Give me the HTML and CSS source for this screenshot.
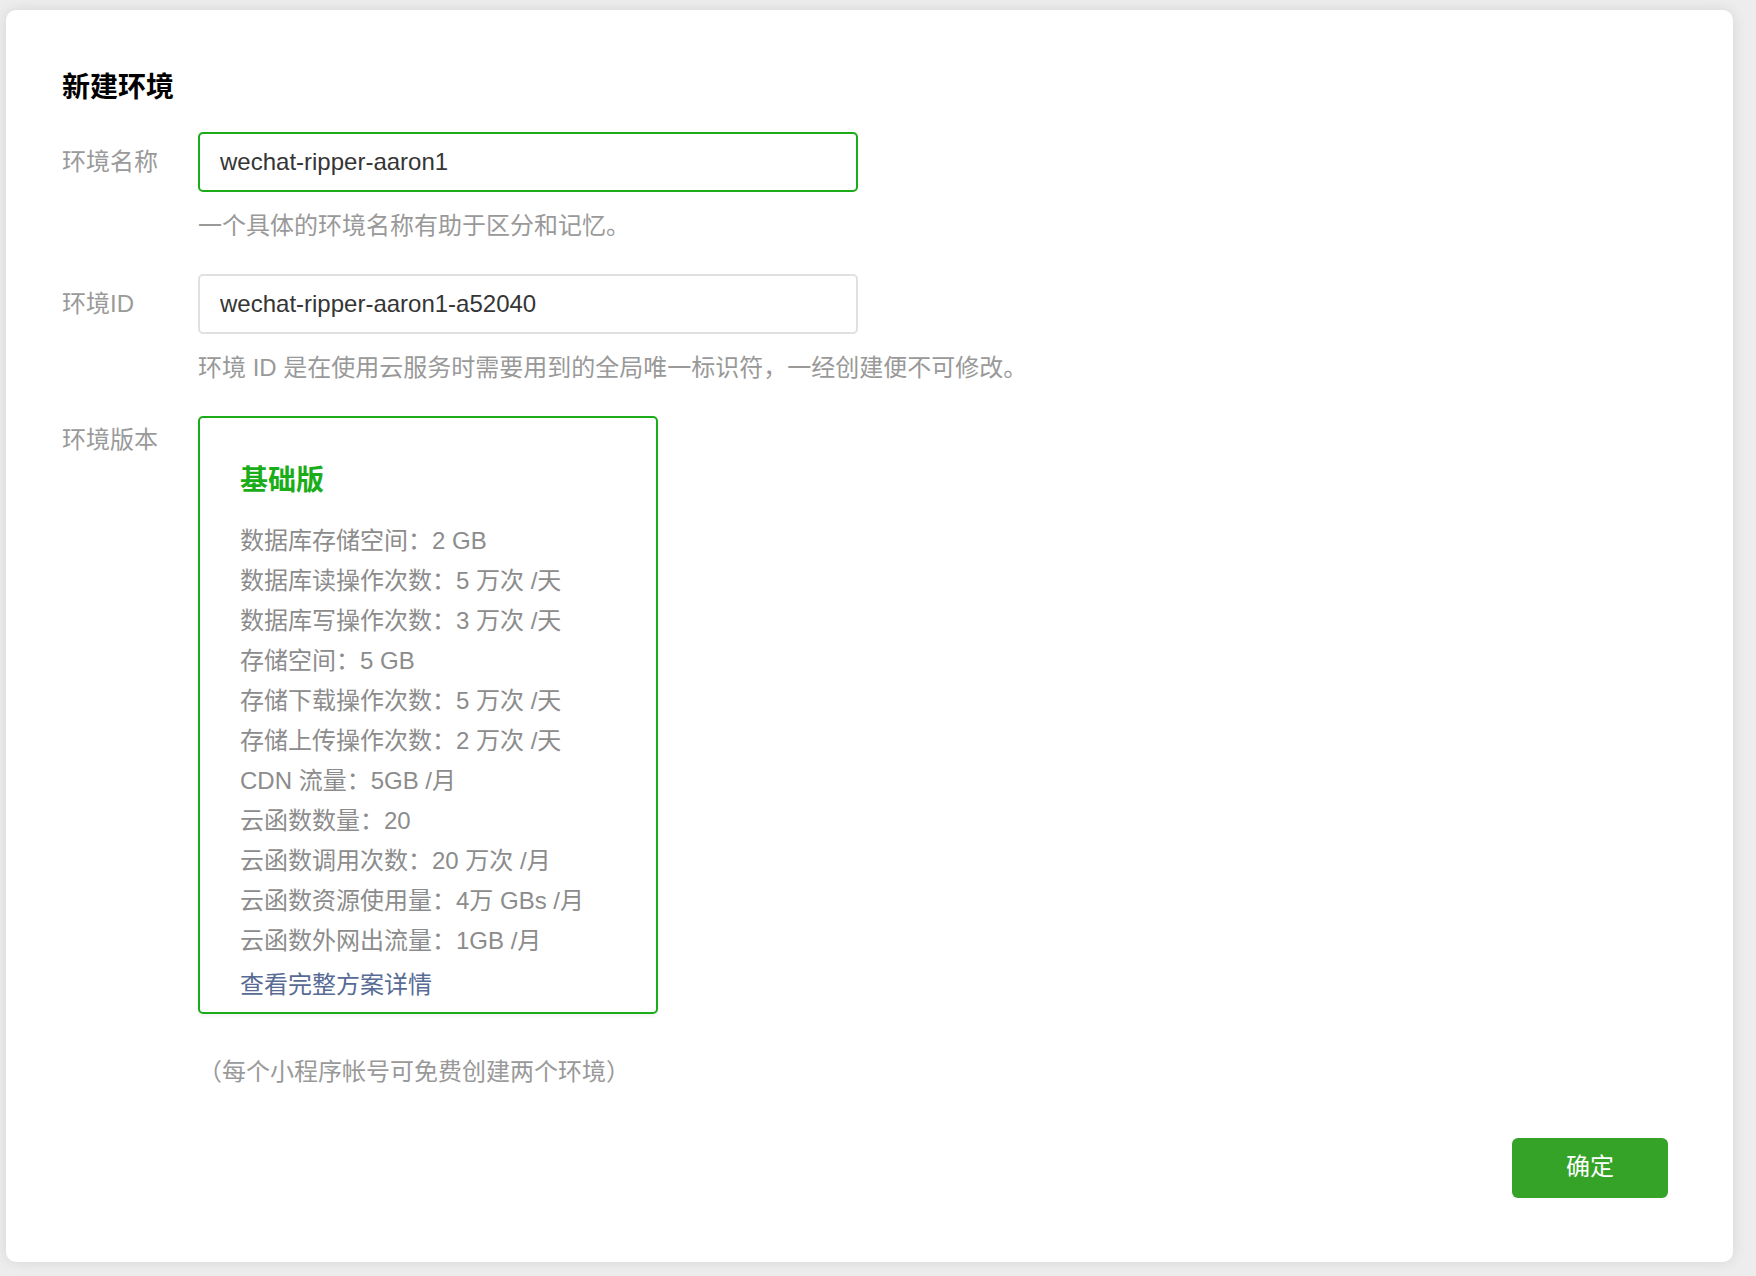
FILE: index.html
```html
<!DOCTYPE html>
<html lang="zh-CN">
<head>
<meta charset="utf-8">
<title>新建环境</title>
<link rel="stylesheet" href="styles.css">
</head>
<body>
<div class="card">
  <h1 class="title">新建环境</h1>

  <div class="row">
    <label class="label">环境名称</label>
    <div class="field">
      <input class="input input-active" type="text" value="wechat-ripper-aaron1" readonly>
    </div>
  </div>
  <div class="hint">一个具体的环境名称有助于区分和记忆。</div>

  <div class="row row-gap">
    <label class="label">环境ID</label>
    <div class="field">
      <input class="input" type="text" value="wechat-ripper-aaron1-a52040" readonly>
    </div>
  </div>
  <div class="hint">环境 ID 是在使用云服务时需要用到的全局唯一标识符，一经创建便不可修改。</div>

  <div class="row row-top row-gap">
    <label class="label label-top">环境版本</label>
    <div class="plan">
      <div class="plan-name">基础版</div>
      <ul class="plan-list">
        <li>数据库存储空间：2 GB</li>
        <li>数据库读操作次数：5 万次 /天</li>
        <li>数据库写操作次数：3 万次 /天</li>
        <li>存储空间：5 GB</li>
        <li>存储下载操作次数：5 万次 /天</li>
        <li>存储上传操作次数：2 万次 /天</li>
        <li>CDN 流量：5GB /月</li>
        <li>云函数数量：20</li>
        <li>云函数调用次数：20 万次 /月</li>
        <li>云函数资源使用量：4万 GBs /月</li>
        <li>云函数外网出流量：1GB /月</li>
      </ul>
      <a class="plan-link" href="#">查看完整方案详情</a>
    </div>
  </div>
  <div class="note">（每个小程序帐号可免费创建两个环境）</div>

  <div class="actions">
    <button class="btn" type="button">确定</button>
  </div>
</div>
</body>
</html>
```

FILE: styles.css
```css
* {
  box-sizing: border-box;
}

html, body {
  margin: 0;
  padding: 0;
}

body {
  background: #ededed;
  font-family: "Liberation Sans", "Noto Sans CJK SC", sans-serif;
  font-size: 24px;
  color: #353535;
  padding: 10px 23px 14px 6px;
}

.card {
  width: 1727px;
  background: #fff;
  border-radius: 10px;
  box-shadow: 0 0 14px rgba(0, 0, 0, 0.10);
  padding: 58px 65px 64px 56px;
}

.title {
  margin: 0 0 24px 0;
  font-size: 28px;
  line-height: 40px;
  font-weight: bold;
  color: #000;
}

.row {
  display: flex;
  align-items: center;
}

.row-gap {
  margin-top: 30px;
}

.row-top {
  align-items: flex-start;
}

.label {
  width: 136px;
  flex: none;
  color: #9a9a9a;
  line-height: 36px;
}

.label-top {
  margin-top: 6px;
}

.field {
  flex: none;
}

.input {
  display: block;
  width: 660px;
  height: 60px;
  padding: 0 20px;
  border: 2px solid #e0e0e0;
  border-radius: 5px;
  font-family: inherit;
  font-size: 24px;
  color: #353535;
  background: #fff;
  outline: none;
}

.input-active {
  border-color: #1aad19;
}

.hint {
  margin-top: 16px;
  margin-left: 136px;
  line-height: 36px;
  color: #999;
}

.plan {
  width: 460px;
  border: 2px solid #1aad19;
  border-radius: 5px;
  padding: 43px 20px 7px 40px;
  box-shadow: 0 2px 4px rgba(0, 0, 0, 0.06);
}

.plan-name {
  font-size: 28px;
  line-height: 40px;
  font-weight: bold;
  color: #1aad19;
}

.plan-list {
  list-style: none;
  margin: 20px 0 0 0;
  padding: 0;
}

.plan-list li {
  line-height: 40px;
  color: #8c8c8c;
}

.plan-link {
  display: block;
  margin-top: 4px;
  line-height: 40px;
  color: #576b95;
  text-decoration: none;
}

.note {
  margin-top: 40px;
  margin-left: 136px;
  line-height: 36px;
  color: #999;
}

.actions {
  display: flex;
  justify-content: flex-end;
  margin-top: 48px;
}

.btn {
  width: 156px;
  height: 60px;
  padding: 0 0 2px 0;
  border: none;
  border-radius: 6px;
  background: #35a228;
  color: #fff;
  font-family: inherit;
  font-size: 24px;
  line-height: 58px;
  cursor: pointer;
}
```
